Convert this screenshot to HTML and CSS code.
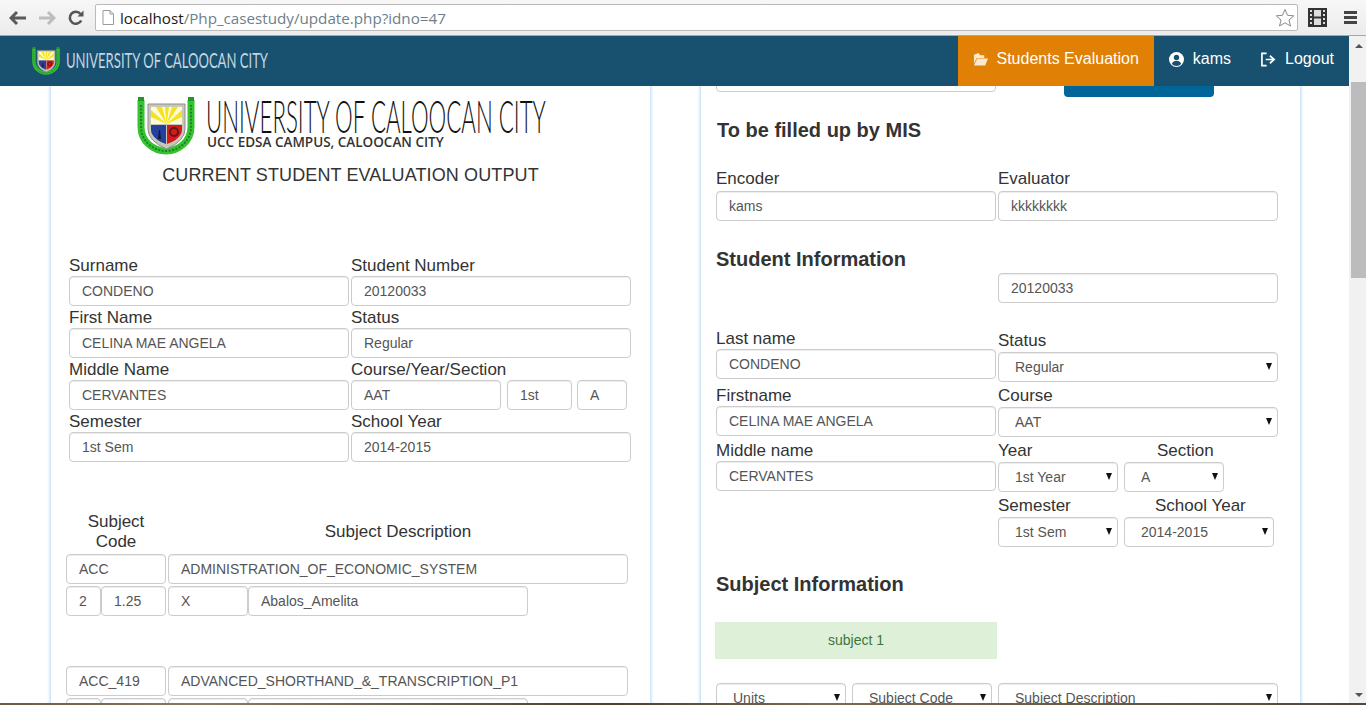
FILE: index.html
```html
<!DOCTYPE html>
<html lang="en">
<head>
    <meta charset="UTF-8">
    <title>Update Student Evaluation</title>
    <link rel="stylesheet" href="styles.css">
</head>
<body>

    <svg class="defs" width="0" height="0">
        <symbol id="crest" viewBox="0 0 58 58">
            <path d="M4 3V30C4 44 16 54 29 54S54 44 54 30V3" fill="none" stroke="#35c42f" stroke-width="7"/>
            <path d="M4 8V30C4 44 16 54 29 54S54 44 54 30V8" fill="none" stroke="#1f7f2a" stroke-width="2" stroke-dasharray="2 1.5"/>
            <rect x="1" y="0" width="6" height="4" fill="#1f9a2a"/>
            <rect x="51" y="0" width="6" height="4" fill="#1f9a2a"/>
            <path d="M11 7H48V32Q48 44 29.500 52Q11 44 11 32Z" fill="#c9c6ba" stroke="#8d8d88"/>
            <path d="M14 10H45V27H14Z" fill="#fffbd6"/>
            <path d="M29.500 27L14 13V20ZM29.500 27L19 10H25ZM29.500 27L28 10H32ZM29.500 27L35 10H41ZM29.500 27L45 13V20Z" fill="#f3e21c"/>
            <path d="M14 28H29V47Q19 44 15 37Q14 35 14 32Z" fill="#23409a"/>
            <path d="M30 28H45V32Q45 35 44 37Q40 44 30 47Z" fill="#d5191f"/>
            <path d="M21 42L22 33H23L24 42Z" fill="#11183c"/>
            <circle cx="37" cy="35" r="4" fill="none" stroke="#5a1a10" stroke-width="2"/>
        </symbol>
    </svg>

    <div class="toolbar">
        <svg class="tool-icon" width="18" height="16" viewBox="0 0 18 16"><path d="M8 2L2 8L8 14M2 8H17" fill="none" stroke="#5a5a5a" stroke-width="3"/></svg>
        <svg class="tool-icon" width="18" height="16" viewBox="0 0 18 16"><path d="M10 2L16 8L10 14M16 8H1" fill="none" stroke="#bdbdbd" stroke-width="3"/></svg>
        <svg class="tool-icon" width="16" height="16" viewBox="0 0 16 16"><path d="M13.200 10.500A6 6 0 1 1 12.500 4" fill="none" stroke="#555" stroke-width="2.600"/><path d="M9.500 6.500H15.500V0.500Z" fill="#555"/></svg>
        <div class="address">
            <svg width="12" height="15" viewBox="0 0 12 15"><path d="M1 .5H8L11.500 4V14.500H1ZM8 .5V4H11.500" fill="#fff" stroke="#9a9a9a"/></svg>
            <span class="url"><b>localhost</b>/Php_casestudy/update.php?idno=47</span>
            <svg class="star" width="20" height="19" viewBox="0 0 20 19"><path d="M10 1.500L12.500 7.300L18.800 7.800L14 12L15.500 18L10 14.800L4.500 18L6 12L1.200 7.800L7.500 7.300Z" fill="#fff" stroke="#8a8a8a"/></svg>
        </div>
        <svg class="film" width="19" height="19" viewBox="0 0 19 19"><path d="M0 0H19V19H0Z" fill="#333"/><path d="M2 2H4V4H2ZM2 6H4V8H2ZM2 10H4V12H2ZM2 14H4V16H2ZM15 2H17V4H15ZM15 6H17V8H15ZM15 10H17V12H15ZM15 14H17V16H15ZM6 2H13V8.500H6ZM6 10.500H13V17H6Z" fill="#ddd"/></svg>
        <div class="burger"><i></i><i></i><i></i></div>
    </div>

    <div class="window">
        <div class="viewport">
            <nav class="navbar">
                <a class="brand">
                    <svg width="28" height="30"><use href="#crest"/></svg>
                    <span class="squeeze nav-squeeze"><span>UNIVERSITY OF CALOOCAN CITY</span></span>
                </a>
                <div class="nav-links">
                    <a class="nav-item active">
                        <svg width="15" height="15" viewBox="0 0 16 15"><path d="M1 2.500L6 .5L7.500 3H12V6H4L1 12ZM4.500 6.500H16L13 14H1Z" fill="#fbe9cf"/></svg>
                        Students Evaluation
                    </a>
                    <a class="nav-item">
                        <svg width="15" height="15" viewBox="0 0 15 15"><circle cx="7.500" cy="7.500" r="7.500" fill="#fff"/><circle cx="7.500" cy="5.500" r="2.700" fill="#18506f"/><path d="M2.800 12C3.500 9.500 5.500 9 7.500 9S11.500 9.500 12.200 12A6.500 6.500 0 0 1 2.800 12Z" fill="#18506f"/></svg>
                        kams
                    </a>
                    <a class="nav-item">
                        <svg width="15" height="15" viewBox="0 0 16 15"><path d="M6 1H1V14H6M5 7.500H13M9.500 3.500L14 7.500L9.500 11.500" fill="none" stroke="#fff" stroke-width="1.800"/></svg>
                        Logout
                    </a>
                </div>
            </nav>

            <div class="content">
                <!-- evaluation output -->
                <section class="panel">
                    <div class="letterhead">
                        <svg width="58" height="58"><use href="#crest"/></svg>
                        <div class="school">
                            <span class="squeeze big-squeeze"><span>UNIVERSITY OF CALOOCAN CITY</span></span>
                            <p class="campus">UCC EDSA CAMPUS, CALOOCAN CITY</p>
                        </div>
                    </div>
                    <h2 class="output-title">CURRENT STUDENT EVALUATION OUTPUT</h2>

                    <div class="student-grid">
                        <div><label>Surname</label><input type="text" value="CONDENO"></div>
                        <div><label>Student Number</label><input type="text" value="20120033"></div>
                        <div><label>First Name</label><input type="text" value="CELINA MAE ANGELA"></div>
                        <div><label>Status</label><input type="text" value="Regular"></div>
                        <div><label>Middle Name</label><input type="text" value="CERVANTES"></div>
                        <div>
                            <label>Course/Year/Section</label>
                            <div class="course-row">
                                <input class="w150" type="text" value="AAT">
                                <input class="w65" type="text" value="1st">
                                <input class="w50" type="text" value="A">
                            </div>
                        </div>
                        <div><label>Semester</label><input type="text" value="1st Sem"></div>
                        <div><label>School Year</label><input type="text" value="2014-2015"></div>
                    </div>

                    <div class="subject-head">
                        <span class="code-head">Subject Code</span>
                        <span class="desc-head">Subject Description</span>
                    </div>
                    <div class="subject">
                        <div class="subject-row">
                            <input class="w100" type="text" value="ACC">
                            <input class="w460" type="text" value="ADMINISTRATION_OF_ECONOMIC_SYSTEM">
                        </div>
                        <div class="subject-row">
                            <div class="joined">
                                <input class="w35" type="text" value="2">
                                <input class="w65" type="text" value="1.25">
                            </div>
                            <div class="joined">
                                <input class="w80" type="text" value="X">
                                <input class="w280" type="text" value="Abalos_Amelita">
                            </div>
                        </div>
                    </div>
                    <div class="subject">
                        <div class="subject-row">
                            <input class="w100" type="text" value="ACC_419">
                            <input class="w460" type="text" value="ADVANCED_SHORTHAND_&amp;_TRANSCRIPTION_P1">
                        </div>
                        <div class="subject-row">
                            <div class="joined">
                                <input class="w35" type="text">
                                <input class="w65" type="text">
                            </div>
                            <div class="joined">
                                <input class="w80" type="text">
                                <input class="w280" type="text">
                            </div>
                        </div>
                    </div>
                </section>

                <!-- update form -->
                <section class="panel panel-form">
                    <div class="cut-row">
                        <input class="w280 cut-input" type="text">
                        <button class="cut-button"></button>
                    </div>

                    <h3 class="mis-title">To be filled up by MIS</h3>
                    <div class="pair-row">
                        <div><label>Encoder</label><input type="text" value="kams"></div>
                        <div><label>Evaluator</label><input type="text" value="kkkkkkkk"></div>
                    </div>

                    <h3 class="info-title">Student Information</h3>
                    <input class="w280 number-input" type="text" value="20120033">

                    <div class="pair-row info-cols">
                        <div class="info-left">
                            <label>Last name</label>
                            <input type="text" value="CONDENO">
                            <label class="mt5">Firstname</label>
                            <input type="text" value="CELINA MAE ANGELA">
                            <label class="mt3">Middle name</label>
                            <input type="text" value="CERVANTES">
                        </div>
                        <div class="info-right">
                            <label>Status</label>
                            <div class="sel"><select><option>Regular</option></select></div>
                            <label class="mt3">Course</label>
                            <div class="sel"><select><option>AAT</option></select></div>
                            <div class="sel-row mt3">
                                <div class="w120">
                                    <label>Year</label>
                                    <div class="sel"><select><option>1st Year</option></select></div>
                                </div>
                                <div class="w100">
                                    <label class="section-label">Section</label>
                                    <div class="sel"><select><option>A</option></select></div>
                                </div>
                            </div>
                            <div class="sel-row mt3">
                                <div class="w120">
                                    <label>Semester</label>
                                    <div class="sel"><select><option>1st Sem</option></select></div>
                                </div>
                                <div class="w150">
                                    <label class="year-label">School Year</label>
                                    <div class="sel"><select><option>2014-2015</option></select></div>
                                </div>
                            </div>
                        </div>
                    </div>

                    <h3 class="subject-title">Subject Information</h3>
                    <div class="alert-success">subject 1</div>
                    <div class="subject-selects">
                        <div class="sel w130"><select><option>Units</option></select></div>
                        <div class="sel w140"><select><option>Subject Code</option></select></div>
                        <div class="sel w280"><select><option>Subject Description</option></select></div>
                    </div>
                </section>
            </div>
        </div>

        <div class="scrollbar">
            <span class="arrow-up"></span>
            <span class="thumb"></span>
            <span class="arrow-down"></span>
        </div>
    </div>

    <div class="taskbar"></div>

</body>
</html>
```

FILE: styles.css
```css
* {
    margin: 0;
    padding: 0;
    box-sizing: border-box;
}

html, body {
    height: 705px;
    overflow: hidden;
}

body {
    font-family: 'Liberation Sans', Arial, sans-serif;
    color: #333;
    background-color: #fff;
    display: flex;
    flex-direction: column;
}

.defs {
    display: block;
    height: 0;
}

/* browser toolbar */
.toolbar {
    height: 36px;
    flex: none;
    display: flex;
    align-items: center;
    background: linear-gradient(#f7f7f7, #ececec);
    border-bottom: 1px solid #a8a8a8;
    padding-left: 9px;
}

.tool-icon {
    margin-right: 12px;
}

.tool-icon:first-child {
    margin-right: 10px;
}

.tool-icon:nth-child(2) {
    margin-left: 1px;
}

.address {
    width: 1203px;
    height: 27px;
    margin-left: -1px;
    padding-left: 6px;
    display: flex;
    align-items: center;
    gap: 6px;
    background-color: #fff;
    border: 1px solid #bbb;
    border-radius: 2px;
}

.url {
    font-family: 'Open Sans', sans-serif;
    font-size: 15.200px;
    color: #6d7f8c;
    flex: 1;
}

.url b {
    font-weight: normal;
    color: #1a1a1a;
}

.star {
    margin-right: 2px;
}

.film {
    margin-left: 10px;
}

.burger {
    margin-left: 17px;
    width: 13px;
    display: flex;
    flex-direction: column;
    gap: 2px;
}

.burger i {
    display: block;
    height: 3px;
    background-color: #444;
}

/* page area */
.window {
    height: 667px;
    flex: none;
    display: flex;
}

.viewport {
    width: 1349px;
    display: flex;
    flex-direction: column;
    overflow: hidden;
}

.navbar {
    height: 50px;
    flex: none;
    display: flex;
    justify-content: space-between;
    background-color: #18506f;
    padding-left: 32px;
}

.brand {
    display: flex;
    align-items: center;
    gap: 6px;
}

.squeeze {
    display: block;
    white-space: nowrap;
    font-family: 'Lato', sans-serif;
}

.squeeze span {
    display: inline-block;
    transform-origin: left center;
}

.nav-squeeze {
    width: 202px;
    margin-bottom: 4px;
    color: #c4d5e0;
    font-size: 21px;
}

.nav-squeeze span {
    transform: scaleX(0.622);
}

.big-squeeze {
    width: 338px;
    height: 38px;
    line-height: 38px;
    color: #111;
    font-size: 45px;
    font-weight: 300;
}

.big-squeeze span {
    transform: scaleX(0.4955);
}

.nav-links {
    display: flex;
}

.nav-item {
    display: flex;
    align-items: center;
    gap: 9px;
    color: #fff;
    font-size: 16px;
    padding: 0 15px 5px;
}

.nav-item svg {
    margin-top: 2px;
}

.nav-item.active {
    background-color: #e08106;
}

.content {
    flex: 1;
    display: flex;
    gap: 49px;
    padding-left: 50px;
    overflow: hidden;
}

.panel {
    width: 601px;
    height: 700px;
    flex: none;
    background-color: #fff;
    border-left: 1px solid #d3e6fa;
    border-right: 1px solid #d3e6fa;
    box-shadow: 0 0 3px rgba(110, 175, 245, 0.5);
}

label {
    display: block;
    font-size: 17px;
    line-height: 20px;
    padding-top: 2px;
    color: #333;
}

input[type="text"] {
    display: block;
    width: 100%;
    height: 30px;
    padding: 0 12px;
    font-family: 'Liberation Sans', Arial, sans-serif;
    font-size: 14px;
    color: #555;
    background-color: #fff;
    border: 1px solid #ccc;
    border-radius: 4px;
    box-shadow: inset 0 1px 1px rgba(0, 0, 0, 0.075);
}

input.w35 { width: 35px; }
input.w50 { width: 50px; }
input.w65 { width: 65px; }
input.w80 { width: 80px; }
input.w100 { width: 100px; }
input.w150 { width: 150px; }
input.w280 { width: 280px; }
input.w460 { width: 460px; }

/* left panel */
.letterhead {
    display: flex;
    gap: 11px;
    padding: 11px 0 0 86px;
}

.campus {
    font-family: 'Open Sans', sans-serif;
    font-size: 13.500px;
    font-weight: 600;
    line-height: 14px;
    color: #333;
    margin-left: 1px;
    white-space: nowrap;
}

.output-title {
    font-size: 18px;
    font-weight: normal;
    line-height: 22px;
    letter-spacing: 0.120px;
    text-align: center;
    margin-top: 9px;
}

.student-grid {
    display: grid;
    grid-template-columns: 280px 280px;
    column-gap: 2px;
    margin: 68px 0 0 18px;
}

.course-row {
    display: flex;
    gap: 6px;
}

.course-row .w50 {
    margin-left: -1px;
}

.subject-head {
    display: flex;
    align-items: center;
    gap: 2px;
    margin: 50px 0 2px 15px;
    font-size: 17px;
    line-height: 20px;
    text-align: center;
}

.code-head {
    width: 100px;
    padding: 0 20px;
}

.desc-head {
    width: 460px;
}

.subject {
    margin: 0 0 50px 15px;
    display: flex;
    flex-direction: column;
    gap: 2px;
}

.subject-row {
    display: flex;
    gap: 2px;
}

.joined {
    display: flex;
}

/* right panel */
.panel-form {
    padding-left: 15px;
}

.cut-row {
    height: 11px;
    display: flex;
    align-items: flex-end;
    overflow: hidden;
}

.cut-input {
    margin-bottom: 5px;
    flex: none;
}

.cut-button {
    width: 150px;
    height: 40px;
    flex: none;
    margin-left: 68px;
    background-color: #006699;
    border: none;
    border-radius: 4px;
}

h3 {
    font-size: 20px;
    line-height: 24px;
    color: #333;
}

.mis-title {
    margin: 21px 0 25px 1px;
}

.pair-row {
    display: flex;
    gap: 2px;
}

.pair-row > div {
    width: 280px;
}

.pair-row label {
    margin-bottom: 2px;
}

.info-title {
    margin: 26px 0 2px;
}

.number-input {
    margin-left: 282px;
}

.info-cols {
    margin-top: 24px;
}

.info-left label {
    margin-bottom: 0;
}

.info-right {
    padding-top: 3px;
}

.info-right label {
    margin-bottom: 0;
    padding-top: 0;
    line-height: 22px;
}

.mt3 {
    margin-top: 3px;
}

.mt5 {
    margin-top: 5px;
}

.sel {
    position: relative;
    height: 30px;
}

.sel::after {
    content: "";
    position: absolute;
    top: 11px;
    right: 6px;
    border-left: 3.500px solid transparent;
    border-right: 3.500px solid transparent;
    border-top: 7px solid #111;
    pointer-events: none;
}

select {
    appearance: none;
    display: block;
    width: 100%;
    height: 30px;
    padding-left: 16px;
    font-family: 'Liberation Sans', Arial, sans-serif;
    font-size: 14px;
    color: #555;
    background-color: #fff;
    border: 1px solid #ccc;
    border-radius: 4px;
    box-shadow: inset 0 1px 1px rgba(0, 0, 0, 0.075);
}

.sel-row {
    display: flex;
    gap: 6px;
}

.w100 { width: 100px; }
.w120 { width: 120px; }
.w130 { width: 130px; }
.w140 { width: 140px; }
.w150 { width: 150px; }
.w280 { width: 280px; }

.section-label {
    padding-left: 33px;
    white-space: nowrap;
}

.year-label {
    padding-left: 31px;
}

.subject-title {
    margin-top: 25px;
}

.alert-success {
    width: 282px;
    height: 37px;
    margin: 26px 0 0 -1px;
    padding-bottom: 2px;
    display: flex;
    align-items: center;
    justify-content: center;
    background-color: #dff0d8;
    color: #3c763d;
    font-size: 14px;
}

.subject-selects {
    display: flex;
    gap: 6px;
    margin-top: 24px;
}

/* scrollbar and what shows under the window */
.scrollbar {
    width: 17px;
    flex: none;
    display: flex;
    flex-direction: column;
    align-items: center;
    background-color: #f1f1f1;
    padding-left: 2px;
}

.arrow-up {
    margin-top: 8px;
    border-left: 4px solid transparent;
    border-right: 4px solid transparent;
    border-bottom: 4px solid #555;
}

.thumb {
    width: 15px;
    height: 196px;
    margin-top: 34px;
    background-color: #bcbcbc;
}

.arrow-down {
    margin-top: auto;
    margin-bottom: 6px;
    border-left: 4px solid transparent;
    border-right: 4px solid transparent;
    border-top: 4px solid #555;
}

.taskbar {
    height: 2px;
    flex: none;
    background: linear-gradient(90deg, #6b5a44, #8c7a60 15%, #4b3f30 45%, #7c6a52 60%, #54463a 100%);
}
```
